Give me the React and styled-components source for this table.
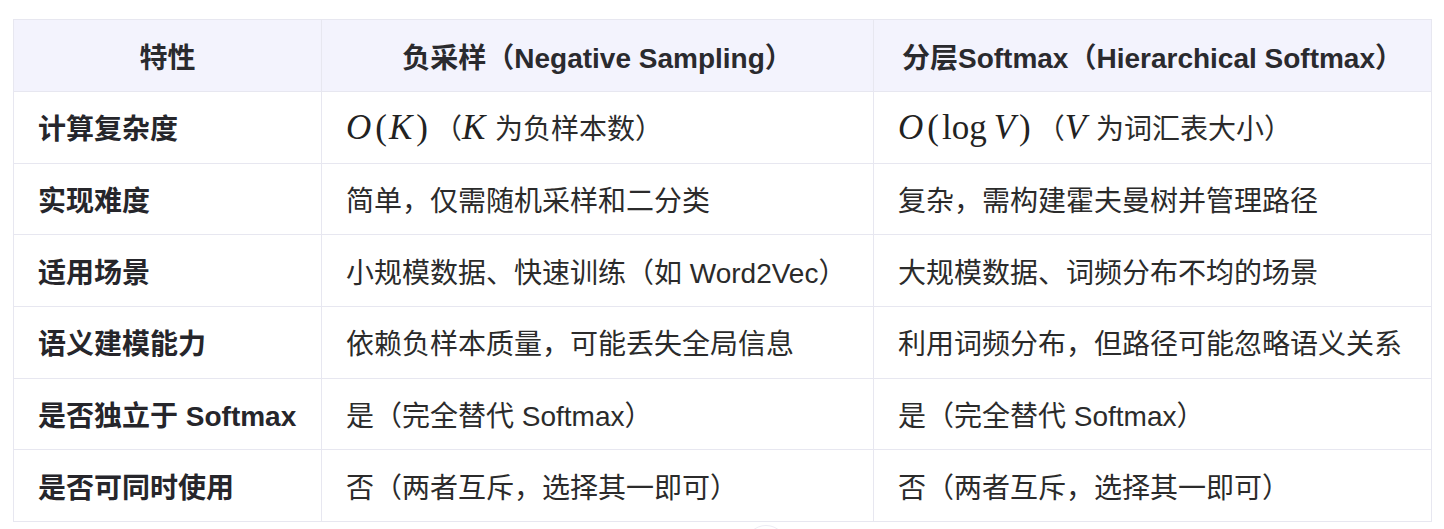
import React from "react";
import styled, { createGlobalStyle } from "styled-components";

const GlobalStyle = createGlobalStyle`
  html, body {
    margin: 0;
    padding: 0;
    background: #ffffff;
  }
  body {
    font-family: "Liberation Sans", "Noto Sans CJK SC", sans-serif;
    color: #262626;
  }
`;

const ROWS = [
  {
    name: "计算复杂度",
    neg: { math: ["O", "(", "K", ")"], var: "K", tail: " 为负样本数）" },
    hs: { math: ["O", "(", "log", "V", ")"], var: "V", tail: " 为词汇表大小）" }
  },
  { name: "实现难度", neg: "简单，仅需随机采样和二分类", hs: "复杂，需构建霍夫曼树并管理路径" },
  { name: "适用场景", neg: "小规模数据、快速训练（如 Word2Vec）", hs: "大规模数据、词频分布不均的场景" },
  { name: "语义建模能力", neg: "依赖负样本质量，可能丢失全局信息", hs: "利用词频分布，但路径可能忽略语义关系" },
  { name: "是否独立于 Softmax", neg: "是（完全替代 Softmax）", hs: "是（完全替代 Softmax）" },
  { name: "是否可同时使用", neg: "否（两者互斥，选择其一即可）", hs: "否（两者互斥，选择其一即可）" }
];

const Page = styled.div`
  position: relative;
  height: 529px;
  overflow: hidden;
  box-sizing: border-box;
  padding: 19px 13px 0 13px;
`;

const Table = styled.table`
  width: 100%;
  border-collapse: collapse;
  table-layout: fixed;
  font-size: 28px;
`;

const HeadCell = styled.th`
  height: 71px;
  padding: 0 24px;
  background: #f3f3fd;
  border: 1px solid #e7e7f0;
  font-weight: 700;
  color: #2a2a2e;
  text-align: center;
  vertical-align: middle;
  white-space: nowrap;
`;

const Cell = styled.td`
  height: 70.67px;
  padding: 0 24px;
  border: 1px solid #e7e7f0;
  font-weight: ${(p) => (p.$bold ? 700 : 400)};
  color: ${(p) => (p.$bold ? "#26262b" : "#2b2b2b")};
  text-align: left;
  vertical-align: middle;
  white-space: nowrap;
`;

const Math = styled.span`
  font-family: "Liberation Serif", "DejaVu Serif", serif;
  font-size: 35px;
  color: #222;
  margin-right: ${(p) => (p.$trail ? "4px" : "0")};
`;

const MathVar = styled.i`
  font-style: italic;
  margin-right: 2px;
`;

const MathOp = styled.span`
  font-style: normal;
  margin: ${(p) => (p.$op ? "0 7px 0 1px" : "0 2px")};
`;

const ScrollHint = styled.div`
  position: absolute;
  left: 745px;
  top: 525px;
  width: 40px;
  height: 40px;
  border-radius: 50%;
  border: 1px solid #ececf4;
  background: #ffffff;
`;

const Formula = ({ parts }) => (
  <Math $trail>
    {parts.map((p, i) =>
      p === "(" || p === ")" ? (
        <MathOp key={i}>{p}</MathOp>
      ) : p === "log" ? (
        <MathOp key={i} $op>log</MathOp>
      ) : (
        <MathVar key={i}>{p}</MathVar>
      )
    )}
  </Math>
);

const Content = ({ value }) => {
  if (typeof value === "string") return value;
  return (
    <>
      <Formula parts={value.math} />
      （
      <Math>
        <MathVar>{value.var}</MathVar>
      </Math>
      {value.tail}
    </>
  );
};

const App = () => (
  <Page>
    <GlobalStyle />
    <Table>
      <colgroup>
        <col style={{ width: 308 }} />
        <col style={{ width: 552 }} />
        <col style={{ width: 558 }} />
      </colgroup>
      <thead>
        <tr>
          <HeadCell>特性</HeadCell>
          <HeadCell>负采样（Negative Sampling）</HeadCell>
          <HeadCell>分层Softmax（Hierarchical Softmax）</HeadCell>
        </tr>
      </thead>
      <tbody>
        {ROWS.map((row) => (
          <tr key={row.name}>
            <Cell $bold>{row.name}</Cell>
            <Cell>
              <Content value={row.neg} />
            </Cell>
            <Cell>
              <Content value={row.hs} />
            </Cell>
          </tr>
        ))}
      </tbody>
    </Table>
    <ScrollHint />
  </Page>
);

export default App;
